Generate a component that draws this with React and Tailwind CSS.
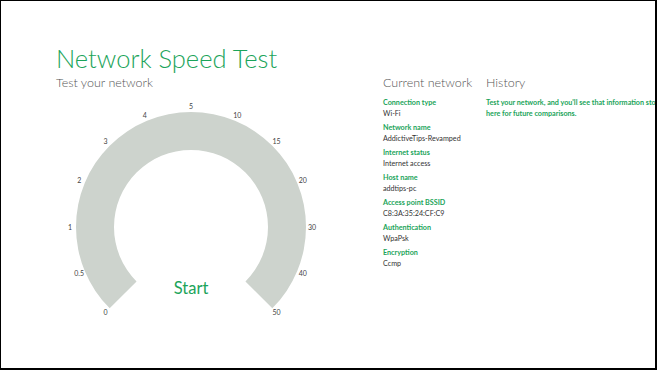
import React from 'react'

const green = '#1ba45a'

const ticks = ['0', '0.5', '1', '2', '3', '4', '5', '10', '15', '20', '30', '40', '50']

const network = [
  ['Connection type', 'Wi-Fi'],
  ['Network name', 'AddictiveTips-Revamped'],
  ['Internet status', 'Internet access'],
  ['Host name', 'addtips-pc'],
  ['Access point BSSID', 'C8:3A:35:24:CF:C9'],
  ['Authentication', 'WpaPsk'],
  ['Encryption', 'Ccmp'],
]

function pt(cx, cy, r, deg) {
  const a = (deg * Math.PI) / 180
  return [cx + r * Math.cos(a), cy - r * Math.sin(a)]
}

function Gauge() {
  const cx = 135
  const cy = 131
  const R = 115
  const r = 77
  const [ox1, oy1] = pt(cx, cy, R, 225)
  const [ox2, oy2] = pt(cx, cy, R, -45)
  const [ix2, iy2] = pt(cx, cy, r, -45)
  const [ix1, iy1] = pt(cx, cy, r, 225)
  const d = `M${ox1} ${oy1} A${R} ${R} 0 1 1 ${ox2} ${oy2} L${ix2} ${iy2} A${r} ${r} 0 1 0 ${ix1} ${iy1} Z`

  return (
    <svg width="280" height="235" viewBox="0 0 280 235" className="block">
      <path d={d} fill="#cdd3cd" />
      {ticks.map((t, i) => {
        const [x, y] = pt(cx, cy, 121, 225 - i * 22.5)
        return (
          <text
            key={t}
            x={x}
            y={y + 2.5}
            textAnchor="middle"
            fontSize="7"
            fill="#444"
            fontFamily="Lato, sans-serif"
          >
            {t}
          </text>
        )
      })}
      <text
        x={cx}
        y={198}
        textAnchor="middle"
        fontSize="16.5"
        fill={green}
        fontFamily="Lato, sans-serif"
      >
        Start
      </text>
    </svg>
  )
}

export default function App() {
  return (
    <div
      className="w-[657px] h-[370px] bg-white border-t border-l border-r-2 border-b-2 border-black overflow-hidden flex pl-[55px] pt-[42px]"
      style={{ fontFamily: 'Lato, sans-serif' }}
    >
      <div className="w-[327px] shrink-0">
        <h1 className="text-[25.5px] leading-[30px] font-light text-[#1ba45a] whitespace-nowrap">
          Network Speed Test
        </h1>
        <p className="mt-[1px] text-[12.5px] leading-[18px] font-light text-[#555]">
          Test your network
        </p>
        <div className="mt-[4px]">
          <Gauge />
        </div>
      </div>

      <div className="w-[103px] shrink-0 mt-[31px]">
        <h2 className="text-[12.5px] leading-[18px] font-light text-[#555] whitespace-nowrap">
          Current network
        </h2>
        <div className="mt-[6px] flex flex-col gap-[4px]">
          {network.map(([label, value]) => (
            <div key={label}>
              <div className="text-[7.2px] leading-[10px] font-bold text-[#1ba45a] whitespace-nowrap">
                {label}
              </div>
              <div className="text-[7.2px] leading-[11px] text-[#333] whitespace-nowrap">
                {value}
              </div>
            </div>
          ))}
        </div>
      </div>

      <div className="shrink-0 mt-[31px]">
        <h2 className="text-[12.5px] leading-[18px] font-light text-[#555]">History</h2>
        <p className="mt-[6px] text-[7.2px] leading-[10.5px] font-bold text-[#1ba45a] whitespace-nowrap">
          Test your network, and you'll see that information stored
          <br />
          here for future comparisons.
        </p>
      </div>
    </div>
  )
}
